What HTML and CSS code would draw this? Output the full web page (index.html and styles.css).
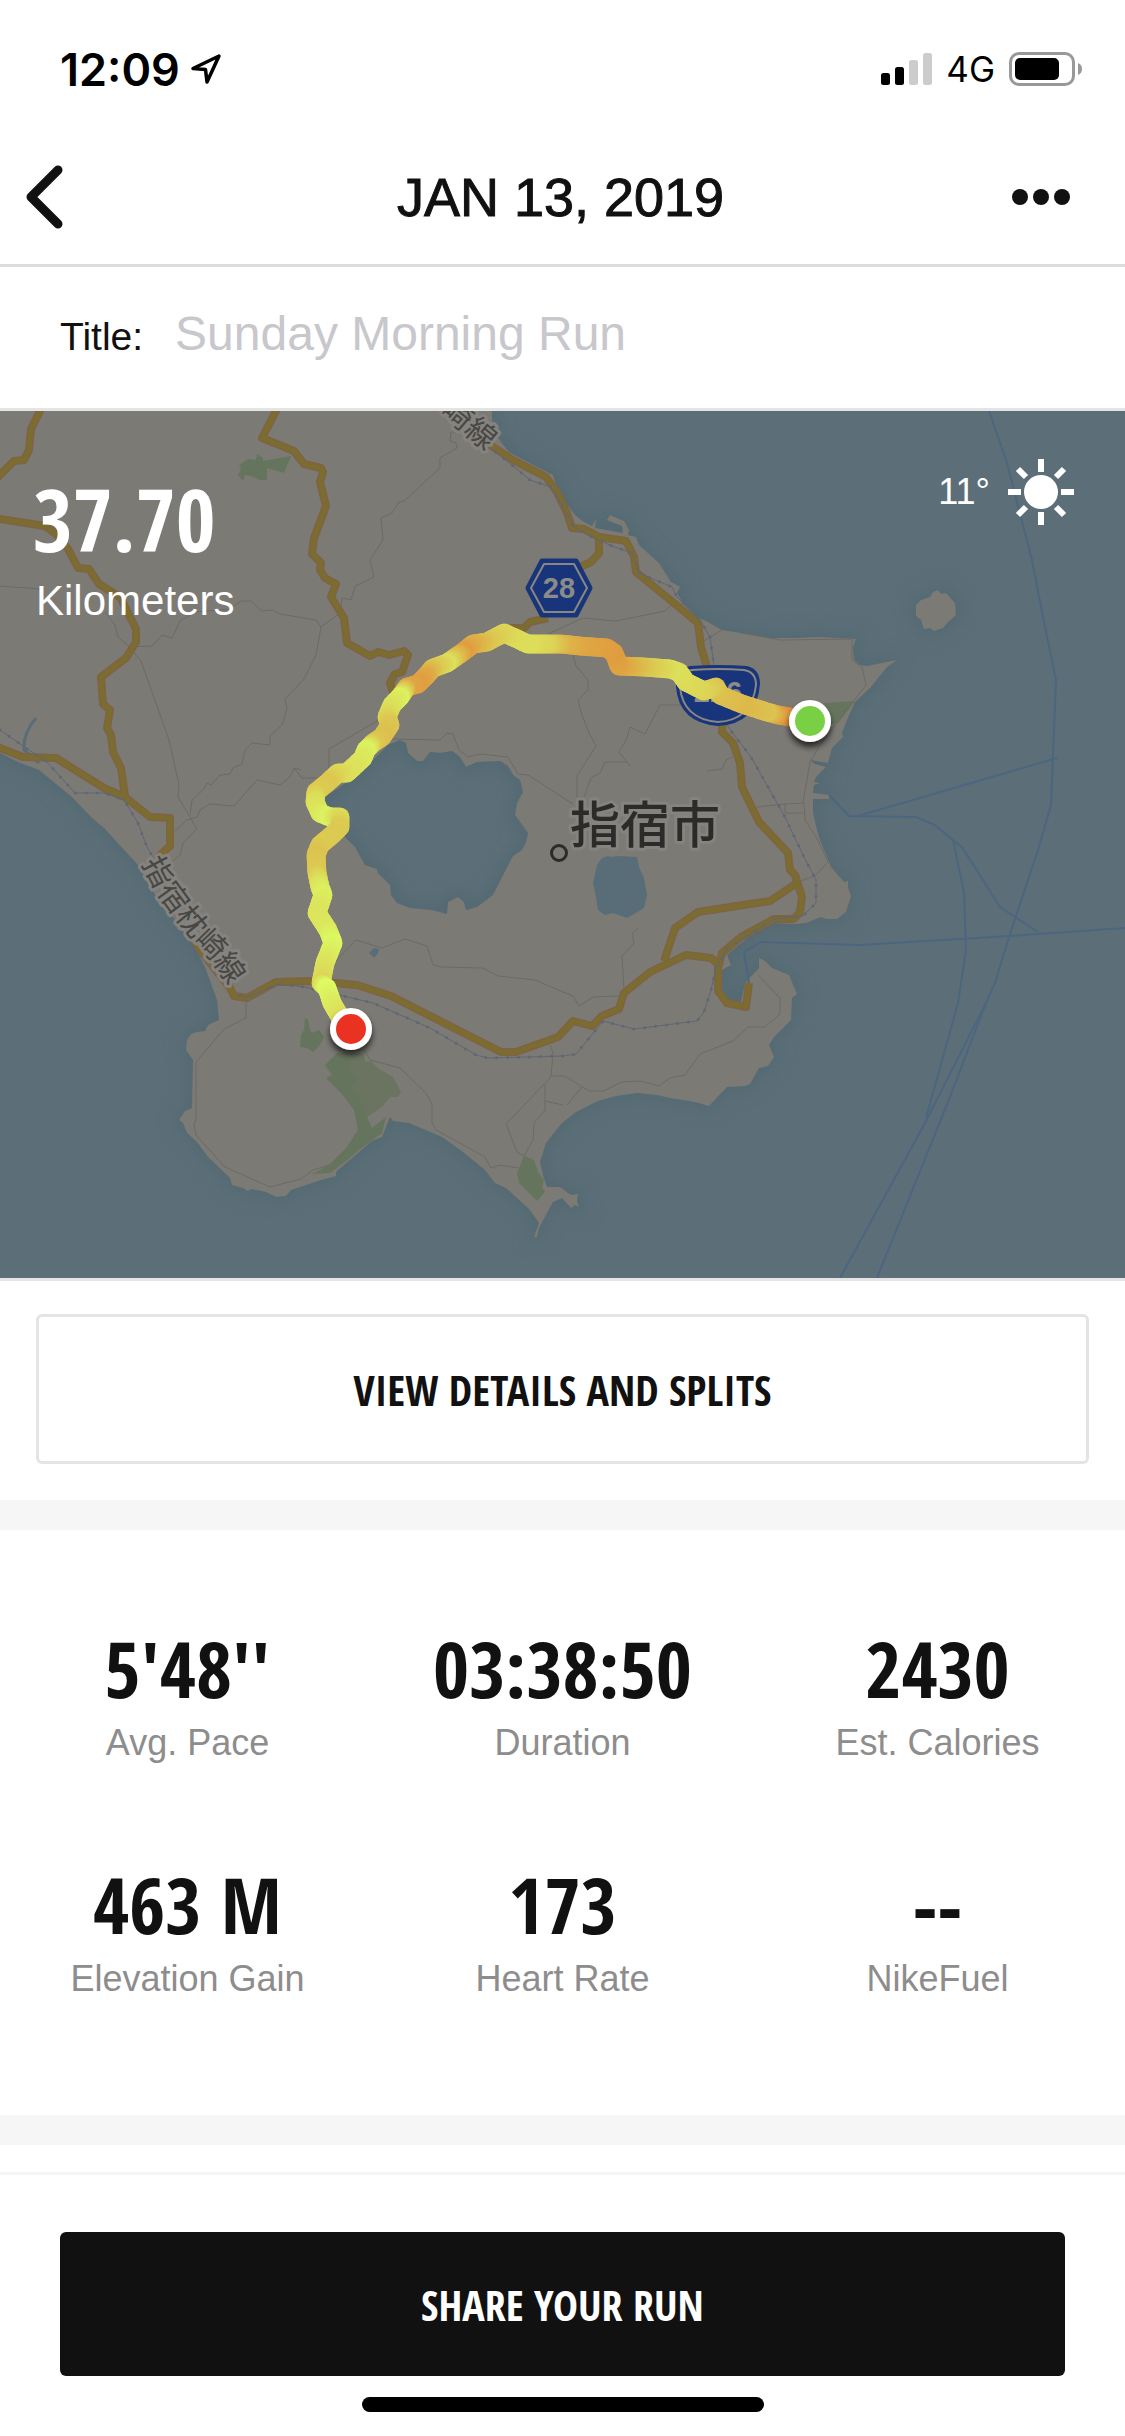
FILE: index.html
```
<!DOCTYPE html>
<html lang="en">
<head>
  <meta charset="UTF-8">
  <meta name="viewport" content="width=device-width, initial-scale=1.0">
  <title>Jan 13, 2019</title>
  <link rel="stylesheet" href="styles.css">
</head>
<body>
  <div class="status-bar">
    <div class="status-left">
      <span class="time">12:09</span>
      <svg class="location" viewBox="0 0 32 32"><path d="M29 3 L3 15.500 L15.500 16.500 L17 29 Z" fill="none" stroke="#000" stroke-width="3.500" stroke-linejoin="round"/></svg>
    </div>
    <div class="status-right">
      <svg class="signal" viewBox="0 0 51 32">
        <rect x="0" y="20" width="9" height="12" rx="2.500"/>
        <rect x="14" y="14" width="9" height="18" rx="2.500"/>
        <rect x="28" y="7" width="9" height="25" rx="2.500" fill="#ccc"/>
        <rect x="42" y="0" width="9" height="32" rx="2.500" fill="#ccc"/>
      </svg>
      <span class="network">4G</span>
      <svg class="battery" viewBox="0 0 73 34">
        <rect x="1.500" y="1.500" width="63" height="31" rx="8.500" fill="none" stroke="#999" stroke-width="3"/>
        <rect x="6" y="6" width="44" height="22" rx="5"/>
        <path d="M69 11 Q73 12.500 73 17 Q73 21.500 69 23 Z" fill="#999"/>
      </svg>
    </div>
  </div>

  <header class="nav">
    <button class="nav-button" aria-label="Back">
      <svg class="chevron" viewBox="0 0 38 64"><path d="M33 5 L6 32 L33 59" fill="none" stroke="#111" stroke-width="9" stroke-linecap="round" stroke-linejoin="round"/></svg>
    </button>
    <h1>JAN 13, 2019</h1>
    <button class="nav-button" aria-label="More">
      <svg class="dots" viewBox="0 0 58 16"><circle cx="8" cy="8" r="8" fill="#111"/><circle cx="29" cy="8" r="8" fill="#111"/><circle cx="50" cy="8" r="8" fill="#111"/></svg>
    </button>
  </header>

  <div class="title-row">
    <label for="runTitle">Title:</label>
    <input type="text" id="runTitle" placeholder="Sunday Morning Run">
  </div>

  <div class="map">
    <svg class="map-canvas" viewBox="0 411 1125 867">
      <defs>
        <filter id="glow" x="-10%" y="-10%" width="120%" height="120%"><feGaussianBlur stdDeviation="8"/></filter>
        <filter id="shadow" x="-50%" y="-50%" width="200%" height="200%"><feDropShadow dx="0" dy="5" stdDeviation="3" flood-color="#000" flood-opacity="0.7"/></filter>
        <clipPath id="lakeClip"><use href="#lake"/></clipPath>
        <path id="land" d="M0 400 H491 L493 430 L501 442 L509 452 L520 458 L539 468 L553 475 L557 488 L562 497 L569 507 L575 515 L584 522 L592 526 L596 519 L595 528 L623 533 L622 526 L607 520 L610 515 L624 521 L629 530 L628 535 L636 537 L639 545 L659 563 L671 582 L680 587 L677 593 L684 605 L697 617 L706 621 L722 630 L741 633 L770 638 L795 638 L820 637 L856 639 L853 647 L854 660 L860 665 L867 666 L887 662 L897 660 L887 667 L871 687 L855 702 L847 720 L842 733 L843 737 L832 748 L828 763 L810 760 L815 764 L826 767 L816 777 L814 782 L820 783 L814 785 L813 793 L829 795 L829 799 L813 799 L813 813 L817 830 L820 840 L831 867 L844 882 L848 881 L848 888 L851 896 L846 912 L837 919 L826 919 L821 917 L806 923 L795 924 L774 923 L755 932 L741 943 L727 955 L731 965 L722 970 L722 990 L729 1000 L741 1002 L745 983 L759 968 L759 958 L765 961 L772 968 L789 975 L797 994 L792 998 L791 1020 L774 1037 L769 1045 L774 1057 L768 1066 L759 1068 L750 1084 L745 1086 L727 1087 L709 1106 L695 1102 L670 1098 L657 1095 L637 1093 L616 1096 L598 1101 L576 1112 L562 1123 L546 1143 L540 1162 L543 1175 L547 1187 L560 1187 L571 1195 L578 1194 L577 1202 L579 1207 L575 1205 L571 1208 L562 1198 L553 1202 L547 1213 L539 1228 L537 1237 L534 1237 L539 1223 L530 1210 L506 1188 L495 1183 L485 1170 L463 1152 L442 1137 L409 1123 L393 1121 L390 1117 L384 1132 L382 1137 L372 1141 L359 1152 L336 1172 L336 1176 L321 1180 L309 1184 L291 1190 L286 1196 L276 1197 L266 1192 L251 1189 L248 1191 L243 1188 L232 1185 L230 1178 L208 1157 L197 1142 L187 1133 L183 1123 L179 1120 L185 1111 L192 1108 L193 1060 L186 1050 L187 1040 L191 1034 L197 1032 L205 1031 L208 1025 L219 1020 L217 1000 L205 967 L187 933 L158 900 L138 865 L115 840 L104 828 L92 818 L72 797 L39 770 L18 762 L0 753 Z"/>
        <path id="lake" d="M388 745 L400 740 L406 743 L408 753 L417 761 L423 761 L430 752 L440 753 L452 751 L460 757 L466 767 L477 762 L500 761 L508 766 L513 775 L520 780 L523 792 L517 803 L515 815 L528 833 L526 842 L522 850 L513 856 L502 877 L493 895 L477 907 L466 910 L464 902 L458 897 L448 902 L447 914 L432 910 L410 908 L397 903 L391 895 L390 885 L378 873 L377 869 L365 865 L355 847 L345 837 L335 820 L325 803 L325 797 L350 780 L373 760 Z"/>
        <path id="rail" d="M487 445 L513 466 L530 480 L551 487 L563 507 L574 527 L592 537 L612 546 L632 553 L639 573 L672 587 L677 597 L700 620 L710 637 L716 680 L722 718 L729 728 L751 757 L768 787 L785 817 L804 857 L816 880 L816 903 L803 916 L774 919 L745 937 L727 948 L716 968 L711 990 L704 1012 L697 1021 L634 1029 L603 1021 L576 1054 L563 1056 L488 1058 L476 1055 L430 1028 L373 1003 L305 987 L278 984 L248 997 L237 995 M0 730 L29 750 L45 760 L75 793 L104 793 L124 800 L138 823 L147 847 L153 857"/>
        <g id="roads">
          <path d="M40 405 V411 L31 429 L29 450 L24 460 L14 461 L0 475 L-5 480"/>
          <path d="M279 405 L276 411 L262 438 L294 451 L304 464 L321 468 L323 472 L320 482 L326 506 L314 538 L312 554 L321 563 L320 570 L325 578 L336 584 L331 597 L344 618 L347 643 L370 656 L378 652 L389 655 L404 651 L408 655 L402 672 L395 674 L390 683 L393 692"/>
          <path d="M-5 518 L0 519 L45 526 L56 534 L68 549 L78 568 L89 569 L99 584 L120 597 L136 629 L136 642 L126 658 L101 677 L103 704 L110 710 L107 728 L111 735 L113 752 L121 768 L125 796"/>
          <path d="M-5 746 L0 748 L23 757 L56 758 L104 788 L125 797 L150 817 L170 818 L170 846 L158 857 L172 905 L200 950 L230 988 L234 996 L247 998 L276 982 L312 981 L357 985 L391 996 L501 1052 L516 1052 L558 1037 L573 1021 L592 1026 L602 1016 L619 1009 L624 993 L650 972 L686 955 L711 958 L719 965"/>
          <path d="M664 961 L675 928 L698 912 L770 901 L797 883"/>
          <path d="M487 443 L513 460 L546 477 L557 492 L567 513 L572 528 L584 529 L599 537 L626 541 L634 557 L636 572 L686 613 L698 623 L701 647 L707 667 L722 720 L722 732 L733 743 L740 763 L742 787 L759 822 L788 853 L790 870 L795 875 L802 897 L800 912 L794 919 L774 919 L741 937 L722 953 L718 968 L718 991 L727 1003 L746 1007 L749 983"/>
          <path d="M599 537 V553 L591 562 L580 567 M548 618 L530 622 L524 628 L510 628"/>
        </g>
      </defs>

      <rect x="0" y="411" width="1125" height="867" fill="#5c6f78"/>
      <g filter="url(#glow)" fill="#4f6670" stroke="#4f6670" stroke-width="12" opacity="0.600">
        <use href="#land"/>
        <path d="M916 603 L930 597 L938 590 L946 593 L956 603 L956 615 L943 627 L934 631 L924 628 L916 617 Z"/>
      </g>
      <use href="#land" fill="#7c7a75"/>
      <path fill="#7c7a75" d="M916 605 L921 600 L930 597 L933 592 L938 590 L941 594 L946 593 L955 603 L956 615 L948 622 L943 628 L934 631 L930 628 L924 629 L921 620 L916 616 Z"/>

      <!-- lakes and stream -->
      <use href="#lake" fill="#5c6f78"/>
      <g clip-path="url(#lakeClip)"><use href="#lake" fill="none" stroke="#4f6670" stroke-width="10" filter="url(#glow)"/></g>
      <path fill="#586d77" d="M597 865 L602 858 L608 856 L611 857 L620 856 L637 857 L639 867 L644 878 L647 895 L644 908 L634 914 L627 918 L613 913 L605 915 L598 910 L596 897 L593 883 Z"/>
      <path fill="#586d77" d="M369 953 L374 948 L379 949 L378 953 L374 958 Z"/>
      <path fill="none" stroke="#586d77" stroke-width="3" d="M36 718 Q23 733 24 750 L39 763"/>

      <!-- parks -->
      <g fill="#65745c">
        <path d="M239 465 L248 459 L256 460 L257 454 L263 458 L263 461 L291 456 L284 473 L267 468 L267 480 L260 480 L251 476 L245 475 L243 481 L238 475 L241 469 Z"/>
        <path d="M305 1018 L308 1020 L310 1030 L312 1033 L319 1030 L324 1037 L320 1045 L313 1052 L307 1048 L300 1047 L301 1035 L304 1030 Z"/>
        <path fill="#6a7460" d="M337 1053 L363 1053 L366 1062 L371 1061 L379 1069 L393 1077 L401 1092 L398 1097 L390 1097 L382 1107 L367 1117 L345 1085 Z"/>
        <path d="M337 1053 L349 1060 L350 1070 L358 1080 L351 1087 L360 1100 L367 1117 L372 1128 L386 1117 L382 1133 L359 1150 L345 1162 L330 1173 L312 1174 L329 1165 L346 1148 L358 1130 L354 1110 L341 1093 L326 1078 L332 1075 L325 1065 Z"/>
        <path d="M524 1156 L534 1160 L538 1172 L544 1180 L542 1187 L545 1192 L537 1201 L519 1183 L517 1173 Z"/>
        <path d="M824 703 L855 701 L838 723 L829 724 Z"/>
      </g>

      <!-- minor roads -->
      <g fill="none" stroke="#6c6a66" stroke-width="1">
        <path d="M0 586 L40 589 M105 612 L115 625 L118 637 L130 647 L152 646 L162 635 L172 638 L180 621 L195 612 L230 609 L241 601 L251 601 L262 611 L273 610 L280 614 L316 620 L321 627 L316 655 L304 679 L285 699 L287 709 L282 725 L270 736 V745 L252 743 L245 750 L242 764 L233 768 L230 774 L220 775 L211 785 L207 783 L204 789 L192 800 L190 815"/>
        <path d="M321 627 L340 613 L342 598 L351 600 L355 586 L368 580 L374 577 L370 560 L383 540 L381 518 L392 513 L399 502 L404 501 L440 468 V458 L457 448 L456 443 L450 441 L451 432 L458 432"/>
        <path d="M130 648 L141 661 L169 740 L179 785 L178 797 L197 829 L183 843 L180 855 L172 862 M175 831 L187 820 L197 817 L200 810 L210 804 L234 806 L257 780 L280 785 L290 777 L294 768 L301 770 M294 768 L302 778 L318 778 L329 770 V749 L377 721 L390 715 M390 739 L440 740 L447 733 L453 734 L459 750 L468 757 L480 754 L508 757 L518 774 L528 775 L573 804"/>
        <path d="M548 634 L583 618 L616 621 L665 611 L671 605 M573 655 L576 666 L588 680 L588 690 L578 700 L582 715 L589 733 L596 746 L577 776 V798 M682 705 H660 L645 734 L630 727 L626 740 L619 752 L630 766 M626 762 H605 L600 773 L591 778 L584 797 M707 771 L722 769 L726 760 L733 757"/>
        <path d="M722 630 L712 636 L704 641 M741 633 L780 640 L852 639 V660 L862 667 L866 685 L845 712 L820 745 L810 762 L803 803 L785 804 L757 807 M804 803 L805 820 L818 840 L828 862 L815 876 L800 881 M785 804 V813 H803"/>
        <path d="M335 962 L356 940 L382 948 L405 939 L427 946 L433 965 L442 967 L483 968 L498 976 L535 980 L563 992 L573 996 L579 1006 L593 997 L619 996 M638 928 L632 934 L634 943 L622 956 L624 990"/>
        <path d="M246 998 V1018 L224 1029 L196 1062 V1120 L194 1124 L196 1135 L225 1167 L270 1187 L301 1179 L313 1170 L329 1165 M364 1050 L370 1060 L400 1068 L426 1093 L432 1104 V1123 L436 1130 L485 1157 L491 1168 L500 1165 L518 1168"/>
        <path d="M550 1045 L553 1053 L551 1077 L506 1124 L517 1152 L524 1156 L533 1140 L534 1123 L545 1110 V1085 M552 1076 H565 L589 1091 H604 L621 1082 L640 1081 L659 1086 L670 1078 L685 1075 L700 1054 L733 1041 L748 1027 H765 L780 1014 V998 L758 975 M582 1087 L567 1105 M545 1101 L563 1105"/>
      </g>

      <!-- ferry lines -->
      <g fill="none" stroke="#4c6680" stroke-width="2">
        <path d="M989 411 L1007 463 L1032 560 L1043 617 L1056 680 L1051 805 L1038 850 L1009 937 L995 983 L986 1003 L950 1097 L877 1278"/>
        <path d="M986 1003 L925 1123 L840 1278 M829 795 L849 816 L916 817 L935 825 L953 840 L964 892 L966 950 L958 1003 L926 1118"/>
        <path d="M858 816 L1057 758 M953 840 L962 847 L1000 907 L1038 932 M749 983 L744 952 L761 942 L860 945 L1009 936 L1125 928"/>
      </g>

      <use href="#roads" fill="none" stroke="#806245" stroke-width="8" stroke-linejoin="round"/>
      <use href="#roads" fill="none" stroke="#7b6d2f" stroke-width="5" stroke-linejoin="round"/>
      <use href="#rail" fill="none" stroke="#5f6674" stroke-width="1"/>
      <use href="#rail" fill="none" stroke="#5f6674" stroke-width="3" stroke-linecap="round" stroke-dasharray="0 11"/>

      <!-- road shields -->
      <path d="M542 561 H576 L590 588 L576 615 H542 L528 588 Z" fill="#18357c" stroke="#18357c" stroke-width="5" stroke-linejoin="round"/>
      <path d="M544 564 H574 L587 588 L574 612 H544 L531 588 Z" fill="none" stroke="#888782" stroke-width="2" stroke-linejoin="round"/>
      <text class="shield" x="559" y="598">28</text>
      <path d="M690 666 Q718 664 747 666 Q760 669 760 684 Q757 724 718 726 Q679 723 676 687 Q676 669 690 666 Z" fill="#18357c"/>
      <path d="M692 670 Q718 668 744 670 Q756 672 756 685 Q752 720 718 722 Q683 719 680 687 Q680 672 692 670 Z" fill="none" stroke="#888782" stroke-width="2"/>
      <text class="shield" x="718" y="702">226</text>

      <!-- place names -->
      <path id="railLabel" d="M152 858 Q160 876 171 893 Q187 915 208 940 Q229 960 246 996" fill="none"/>
      <path id="railLabelNorth" d="M430 390 L506 454" fill="none"/>
      <text class="line-name" dy="11"><textPath href="#railLabel">指宿枕崎線</textPath></text>
      <text class="line-name" dy="11"><textPath href="#railLabelNorth" startOffset="22">崎線</textPath></text>
      <text class="city-name" x="570" y="843">指宿市</text>
      <circle cx="559" cy="853" r="7.500" fill="none" stroke="#2c2b29" stroke-width="3"/>

      <g id="route"></g>

      <g stroke="#fff" stroke-width="6">
        <circle cx="810" cy="721" r="18" fill="#7ad044" filter="url(#shadow)"/>
        <circle cx="351" cy="1029" r="18" fill="#e93323" filter="url(#shadow)"/>
      </g>
    </svg>

    <div class="distance">
      <strong>37.70</strong>
      <span>Kilometers</span>
    </div>
    <div class="weather">
      <span>11°</span>
      <svg class="sun" viewBox="-33 -33 66 66">
        <circle r="17" fill="#fff"/>
        <path d="M0 -33 V-20 M0 20 V33 M-33 0 H-20 M20 0 H33 M-23 -23 L-15 -15 M15 15 L23 23 M-23 23 L-15 15 M15 -15 L23 -23" stroke="#fff" stroke-width="6"/>
      </svg>
    </div>
  </div>

  <div class="details">
    <button class="outline-button">VIEW DETAILS AND SPLITS</button>
  </div>

  <dl class="stats">
    <div class="stat"><dd>5'48''</dd><dt>Avg. Pace</dt></div>
    <div class="stat"><dd>03:38:50</dd><dt>Duration</dt></div>
    <div class="stat"><dd>2430</dd><dt>Est. Calories</dt></div>
    <div class="stat"><dd>463 M</dd><dt>Elevation Gain</dt></div>
    <div class="stat"><dd>173</dd><dt>Heart Rate</dt></div>
    <div class="stat"><dd>--</dd><dt>NikeFuel</dt></div>
  </dl>

  <footer class="share">
    <button class="share-button">SHARE YOUR RUN</button>
    <div class="home-indicator"></div>
  </footer>

  <script>
    // x, y, pace (0 = red, 50 = orange, 100 = bright yellow)
    const points = [
      [810, 721, 5], [790, 717, 30], [778, 715, 50], [767, 712, 70], [742, 704, 64], [720, 695, 68],
      [716, 687, 70], [704, 691, 78], [686, 682, 82], [679, 672, 84], [670, 669, 85], [645, 667, 72],
      [619, 666, 54], [614, 653, 49], [607, 648, 50], [580, 646, 54], [562, 644, 62], [547, 644, 78],
      [528, 644, 84], [513, 637, 83], [504, 633, 80], [487, 642, 72], [473, 644, 60], [463, 652, 49],
      [447, 663, 85], [433, 668, 72], [425, 677, 56], [418, 684, 50], [407, 687, 54], [400, 697, 94],
      [392, 705, 88], [387, 717, 80], [390, 725, 72], [382, 737, 68], [373, 743, 72], [366, 750, 95],
      [363, 758, 90], [347, 773, 85], [338, 773, 82], [327, 783, 72], [316, 792, 74], [315, 802, 84],
      [320, 813, 88], [330, 817, 95], [340, 817, 83], [340, 827, 74], [332, 835, 73], [320, 845, 74],
      [316, 855, 70], [317, 873, 73], [320, 887, 88], [323, 895, 93], [317, 913, 87], [328, 930, 89],
      [333, 943, 98], [325, 963, 88], [321, 983, 80], [327, 988, 100], [332, 1003, 92], [340, 1017, 86],
      [351, 1029, 86]
    ];
    const stops = [[0, 230, 95, 50], [50, 224, 158, 64], [70, 220, 195, 80], [85, 220, 224, 90], [100, 220, 252, 100]];

    function paceColor(pace) {
      let i = 1;
      while (i < stops.length - 1 && pace > stops[i][0]) i++;
      const a = stops[i - 1], b = stops[i];
      const t = (pace - a[0]) / (b[0] - a[0]);
      return 'rgb(' + [1, 2, 3].map(c => Math.round(a[c] + (b[c] - a[c]) * t)).join(',') + ')';
    }

    const route = document.getElementById('route');
    for (let i = 1; i < points.length; i++) {
      const [x1, y1, p1] = points[i - 1];
      const [x2, y2, p2] = points[i];
      const steps = Math.ceil(Math.hypot(x2 - x1, y2 - y1) / 2);
      for (let s = 0; s < steps; s++) {
        const t = s / steps;
        const dot = document.createElementNS('http://www.w3.org/2000/svg', 'circle');
        dot.setAttribute('cx', x1 + (x2 - x1) * t);
        dot.setAttribute('cy', y1 + (y2 - y1) * t);
        dot.setAttribute('r', 9.5);
        dot.setAttribute('fill', paceColor(p1 + (p2 - p1) * t));
        route.appendChild(dot);
      }
    }
  </script>
</body>
</html>
```
FILE: styles.css
```
* {
  margin: 0;
  padding: 0;
  box-sizing: border-box;
}

body {
  display: flex;
  flex-direction: column;
  min-height: 100vh;
  background: #fff;
  color: #111;
  font-family: "Liberation Sans", Arial, sans-serif;
}

button {
  border: none;
  background: none;
  color: inherit;
  cursor: pointer;
}

svg {
  display: block;
}

.status-bar {
  display: flex;
  justify-content: space-between;
  align-items: center;
  height: 132px;
  padding: 6px 43px 0 60px;
  color: #000;
  font-family: Inter, sans-serif;
}

.status-left,
.status-right {
  display: flex;
  align-items: center;
}

.status-left {
  gap: 10px;
}

.status-right {
  gap: 14px;
}

.time {
  font-size: 45px;
  font-weight: 600;
}

.network {
  font-size: 35px;
}

.location {
  width: 32px;
  height: 32px;
}

.signal {
  width: 51px;
  height: 32px;
}

.battery {
  width: 73px;
  height: 34px;
}

.nav {
  display: flex;
  justify-content: space-between;
  align-items: center;
  height: 135px;
  padding: 0 29px 2px 25px;
  border-bottom: 3px solid #dcdcdc;
}

.nav h1 {
  font-size: 54px;
  font-weight: normal;
  -webkit-text-stroke: 1px #111;
}

.nav-button {
  display: flex;
  align-items: center;
  width: 84px;
  height: 84px;
}

.chevron {
  width: 38px;
  height: 64px;
}

.dots {
  width: 58px;
  height: 16px;
}

.title-row {
  display: flex;
  align-items: baseline;
  gap: 32px;
  height: 144px;
  padding: 39px 60px 0;
  border-bottom: 3px solid #e4e4e4;
}

.title-row label {
  font-size: 39px;
}

.title-row input {
  flex: 1;
  border: none;
  outline: none;
  background: none;
  color: #111;
  font-family: inherit;
  font-size: 48px;
}

.title-row input::placeholder {
  color: #c7c7cc;
}

.map {
  position: relative;
  border-bottom: 3px solid #e4e4e4;
}

.map-canvas {
  width: 100%;
  height: auto;
}

.shield {
  fill: #8c8b87;
  font-size: 29px;
  font-weight: bold;
  text-anchor: middle;
}

.line-name,
.city-name {
  font-family: "Noto Sans CJK JP", sans-serif;
  paint-order: stroke;
  stroke: #85837f;
  stroke-width: 6px;
  stroke-linejoin: round;
}

.line-name {
  fill: #484743;
  font-size: 30px;
}

.city-name {
  fill: #2c2b29;
  font-size: 50px;
  font-weight: 500;
}

.distance {
  position: absolute;
  top: 49px;
  left: 33px;
  color: #fff;
}

.distance strong {
  display: block;
  font-family: "Open Sans Condensed", "Roboto Condensed", sans-serif;
  font-size: 86px;
  line-height: 117px;
}

.distance span {
  display: block;
  padding: 0 3px;
  font-size: 42px;
  line-height: 48px;
}

.weather {
  position: absolute;
  top: 48px;
  right: 51px;
  display: flex;
  align-items: center;
  gap: 18px;
  color: #fff;
  font-size: 36px;
}

.sun {
  width: 66px;
  height: 66px;
}

.details {
  padding: 33px 36px 36px;
  border-bottom: 30px solid #f6f6f6;
}

.outline-button,
.share-button {
  display: block;
  width: 100%;
  border-radius: 6px;
  font-family: "Open Sans Condensed", "Roboto Condensed", sans-serif;
  font-size: 42px;
  font-weight: bold;
}

.outline-button {
  height: 150px;
  border: 3px solid #e4e4e4;
}

.stats {
  display: grid;
  grid-template-columns: repeat(3, 1fr);
  row-gap: 86px;
  padding: 85px 0 114px;
  border-bottom: 30px solid #f6f6f6;
  text-align: center;
}

.stat dd {
  font-family: "Open Sans Condensed", "Roboto Condensed", sans-serif;
  font-size: 78px;
  font-weight: bold;
  line-height: 106px;
}

.stat dt {
  color: #8d8d8d;
  font-size: 36px;
  line-height: 44px;
}

.share {
  margin-top: auto;
  padding: 57px 60px 24px;
  border-top: 3px solid #f6f6f6;
}

.share-button {
  height: 144px;
  background: #111;
  color: #fff;
}

.home-indicator {
  width: 40%;
  max-width: 402px;
  height: 15px;
  margin: 21px auto 0;
  border-radius: 8px;
  background: #000;
}
```
